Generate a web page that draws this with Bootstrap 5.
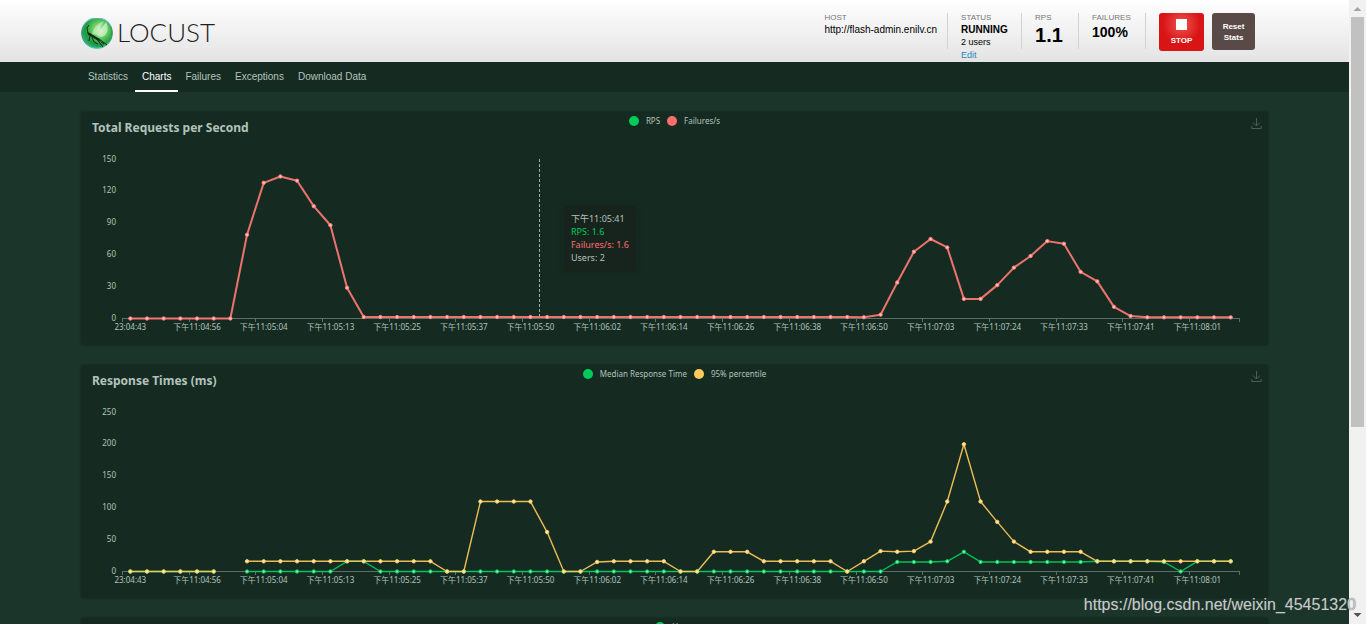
<!DOCTYPE html>
<html lang="en">
<head>
<meta charset="utf-8">
<meta name="viewport" content="width=device-width, initial-scale=1">
<title>Locust</title>
<link href="https://cdn.jsdelivr.net/npm/bootstrap@5.3.0/dist/css/bootstrap.min.css" rel="stylesheet">
<style>
  :root { --ink: #b3c3bc; --deep: #152b22; --green: #00ca5a; --red: #ff6d6d; --amber: #ffca5a; }
  body { background: #1b352b; color: var(--ink); font-family: "Noto Sans", "Noto Sans CJK SC", sans-serif; font-size: 10px; line-height: 13px; }
  .wrap { width: 88%; margin: 0 auto; }
  .top-bar { background: linear-gradient(#fff, #e3e3e3); height: 62px; font-family: "Liberation Sans", Arial, sans-serif; color: #000; }
  .brand-name { font-family: Lato, sans-serif; font-weight: 300; font-size: 26px; line-height: 32px; color: #222; }
  .stats-row { padding: 13px 13px 0 0; }
  .stat { height: 36px; padding-left: 13px; border-right: 1px solid #d2d2d2; font-size: 9px; line-height: 13px; white-space: nowrap; }
  .stat-label { font-size: 8px; line-height: 10px; color: #777; }
  .stat-host { padding-right: 10px; font-size: 10px; }
  .stat-status { width: 74px; }
  .stat-rps { width: 57px; }
  .stat-fail { width: 67px; margin-right: 13px; }
  .state { font-size: 10px; line-height: 13px; }
  .rate { font-size: 20px; line-height: 24px; }
  .ratio { font-size: 14px; line-height: 18px; }
  .stat a { color: #2a85b8; line-height: 12px; }
  .act { border: 0; border-radius: 3px; color: #fff; font-weight: 700; font-size: 8px; line-height: 11px; }
  .act-stop { width: 45px; height: 38px; background: radial-gradient(circle at 50% 30%, #e55 0, #d81414 55%); }
  .act-stop i { width: 11px; height: 11px; background: #fff; margin-bottom: 5px; }
  .act-reset { width: 43px; height: 37px; background: #594a48; }
  .tabs-bar { background: var(--deep); height: 30px; font-family: "Liberation Sans", Arial, sans-serif; }
  .tabs-bar .nav-link { padding: 8px 7px 7px; font-size: 10px; line-height: 13px; color: var(--ink); border-bottom: 2px solid transparent; }
  .tabs-bar .nav-link.active { color: #fff; border-color: #fff; }
  .panel { background: var(--deep); border-radius: 3px; margin-top: 20px; height: 233px; box-shadow: 0 0 1px 1px #172f26; }
  .panel-head { display: grid; grid-template-columns: 1fr auto 1fr; height: 28px; align-items: start; }
  .panel-title { font-size: 12px; line-height: 16px; font-weight: 700; margin: 8px 0 0 11px; }
  .legend-row { gap: 7px; font-size: 8px; line-height: 18px; grid-column: 2; }
  .dot { width: 10px; height: 10px; border-radius: 50%; }
  .save { border: 0; background: none; padding: 0; margin: 6px 6px 0 0; color: #4d5e56; justify-self: end; display: flex; }
  .plot { display: block; width: 100%; height: 205px; }
  .plot text { font-size: 8px; fill: var(--ink); }
  .tip { top: 94px; width: 72px; height: 66px; padding: 6px 7px; background: #17241e; border-radius: 3px; box-shadow: 0 0 5px #17241e; font-size: 9px; line-height: 13px; white-space: nowrap; }
  .g { color: var(--green); } .r { color: var(--red); }
  .bg-g { background: var(--green); } .bg-r { background: var(--red); } .bg-a { background: var(--amber); }
  .scroller { width: 17px; background: #f1f1f1; padding: 0 2px; }
  .scroller svg { height: 17px; flex: none; }
  .thumb { background: #c1c1c1; height: 69.5%; }
  .watermark { right: 10px; bottom: 8px; font: 16px/22px "Liberation Sans", Arial, sans-serif; color: #c4cbc8; text-shadow: 0 0 1px #555; z-index: 5; }
</style>
</head>
<body>
<div class="d-flex vh-100 overflow-hidden position-relative">
  <div class="flex-grow-1 overflow-hidden">
    <header class="top-bar">
      <div class="wrap d-flex justify-content-between">
        <a href="#" class="d-flex align-items-center text-decoration-none mt-3 pb-3" aria-label="Locust home">
          <svg width="32" height="32" viewBox="0 0 32 32" class="me-1" aria-hidden="true">
            <defs>
              <radialGradient id="orb" cx=".6" cy=".4" r=".65"><stop offset="0" stop-color="#c4efb8"/><stop offset=".4" stop-color="#62c95f"/><stop offset=".75" stop-color="#1f9a3c"/><stop offset="1" stop-color="#2bb08a"/></radialGradient>
              <linearGradient id="rim" x1="0" y1="0" x2="0" y2="1"><stop offset="0" stop-color="#62c5cf"/><stop offset=".5" stop-color="#2a8a58"/><stop offset="1" stop-color="#4cc4a4"/></linearGradient>
            </defs>
            <circle cx="16" cy="15" r="15.2" fill="url(#orb)" stroke="url(#rim)" stroke-width="1.2"/>
            <path d="M11 16C12 10 17 5 23 3C20 8 18 12 17 17Z" fill="#e6f8dc" opacity=".5"/>
            <path d="M16 17L25 4C28 9 27 15 23 18C20 20 18 19 16 17Z" fill="#effbe8" opacity=".55"/>
            <path d="M6 14L9 15L12 17L18 20.500L20 24L15 21.500L10 18.500L7 17Z" fill="#102b1c"/>
            <path d="M7 15L6 10L8 7M9 18L8 23M11 19L13 24L17 26M15 20L22 29M18 21L26 27M20 24L23 26" fill="none" stroke="#102b1c"/>
          </svg>
          <span class="brand-name pb-1">LOCUST</span>
        </a>
        <div class="d-flex stats-row">
          <div class="stat stat-host"><div class="stat-label">HOST</div>http://flash-admin.enilv.cn</div>
          <div class="stat stat-status"><div class="stat-label">STATUS</div><div class="state fw-bold">RUNNING</div><div>2 users</div><a href="#" class="d-block text-decoration-none">Edit</a></div>
          <div class="stat stat-rps"><div class="stat-label">RPS</div><div class="rate fw-bold">1.1</div></div>
          <div class="stat stat-fail"><div class="stat-label">FAILURES</div><div class="ratio fw-bold">100%</div></div>
          <button class="act act-stop d-flex flex-column align-items-center justify-content-center me-2 p-0"><i></i>STOP</button>
          <button class="act act-reset p-0">Reset<br>Stats</button>
        </div>
      </div>
    </header>
    <nav class="tabs-bar">
      <div class="wrap nav flex-nowrap">
        <a class="nav-link" href="#">Statistics</a>
        <a class="nav-link active" href="#" aria-current="page">Charts</a>
        <a class="nav-link" href="#">Failures</a>
        <a class="nav-link" href="#">Exceptions</a>
        <a class="nav-link" href="#">Download Data</a>
      </div>
    </nav>
    <main class="wrap">
      <section class="panel position-relative">
        <div class="panel-head">
          <h2 class="panel-title">Total Requests per Second</h2>
          <div class="legend-row d-flex align-items-center"><span class="dot bg-g"></span><span>RPS</span><span class="dot bg-r"></span><span>Failures/s</span></div>
          <button class="save" aria-label="Download chart"><svg width="11" height="11" viewBox="0 0 11 11" fill="none" stroke="currentColor"><path d="M5.5 0V8M2 4.5L5.5 8L9 4.5M.8 8V10.5H10.2V8"/></svg></button>
        </div>
        <svg class="plot" id="rps"></svg>
        <div class="tip position-absolute" id="tip">下午11:05:41<br><span class="g">RPS: 1.6</span><br><span class="r">Failures/s: 1.6</span><br>Users: 2</div>
      </section>
      <section class="panel">
        <div class="panel-head">
          <h2 class="panel-title">Response Times (ms)</h2>
          <div class="legend-row d-flex align-items-center"><span class="dot bg-g"></span><span>Median Response Time</span><span class="dot bg-a"></span><span>95% percentile</span></div>
          <button class="save" aria-label="Download chart"><svg width="11" height="11" viewBox="0 0 11 11" fill="none" stroke="currentColor"><path d="M5.5 0V8M2 4.5L5.5 8L9 4.5M.8 8V10.5H10.2V8"/></svg></button>
        </div>
        <svg class="plot" id="times"></svg>
      </section>
      <section class="panel">
        <div class="panel-head">
          <div class="legend-row d-flex align-items-center"><span class="dot bg-g"></span><span>Users</span></div>
        </div>
      </section>
    </main>
  </div>
  <div class="scroller d-flex flex-column flex-shrink-0" aria-hidden="true">
    <svg viewBox="0 0 13 17"><path d="M2.5 11L6.5 7L10.5 11Z" fill="#a3a3a3"/></svg>
    <div class="flex-grow-1"><div class="thumb"></div></div>
    <svg viewBox="0 0 13 17"><path d="M2.5 6L6.5 10L10.5 6Z" fill="#505050"/></svg>
  </div>
  <div class="watermark position-absolute">https://blog.csdn.net/weixin_45451320</div>
</div>
<script src="https://cdn.jsdelivr.net/npm/bootstrap@5.3.0/dist/js/bootstrap.bundle.min.js"></script>
<script>
  const rep = (v, n) => Array(n).fill(v);
  const labels = ['23:04:43', '下午11:04:56', '下午11:05:04', '下午11:05:13', '下午11:05:25', '下午11:05:37', '下午11:05:50', '下午11:06:02', '下午11:06:14', '下午11:06:26', '下午11:06:38', '下午11:06:50', '下午11:07:03', '下午11:07:24', '下午11:07:33', '下午11:07:41', '下午11:08:01'];
  const rps = [...rep(0, 7), 79, 128, 134, 130, 106, 88, 29, ...rep(1.4, 30), 1.2, 3.6, 34, 63, 75, 67, 18.5, 18.5, 31.5, 48, 59, 73, 70.5, 44, 35, 11, 2.3, ...rep(1.1, 6)];
  const p95 = [...rep(0, 6), null, ...rep(16, 12), 0, 0, ...rep(110, 4), 62, 0, 0, 15, ...rep(16, 4), 0, 0, ...rep(31, 3), ...rep(16, 5), 0, 16, 32, 31, 32, 47, 110, 200, 110, 78, 47, ...rep(31, 4), ...rep(16, 9)];
  const median = [...rep(0, 6), null, ...rep(0, 6), 16, 16, ...rep(0, 31), 15, 15, 15, 16, 31, ...rep(15, 7), ...rep(16, 4), 15, 0, 16, 16, 16];
  const LEFT = 41, RIGHT = 29, TOP = 19, BASE = 178, COUNT = 67;

  function draw(id, max, tick, series, stroke, pointer) {
    const svg = document.getElementById(id), w = svg.clientWidth;
    const step = (w - LEFT - RIGHT) / COUNT, end = w - RIGHT;
    const x = i => LEFT + step * (i + .5), y = v => BASE + .5 - v / max * (BASE - TOP);
    let s = `<path d="M${LEFT} ${BASE + .5}H${end}" stroke="#5b6f66"/>`;
    for (let v = 0; v <= max; v += tick) s += `<text x="${LEFT - 6}" y="${y(v) + 2}" text-anchor="end">${v}</text>`;
    labels.forEach((t, k) => {
      const tx = Math.round(LEFT + step * 4 * k) + .5;
      s += `<path d="M${tx} ${BASE}v4" stroke="#5b6f66"/><text x="${x(4 * k)}" y="${BASE + 12}" text-anchor="middle">${t}</text>`;
    });
    s += `<path d="M${Math.round(end) + .5} ${BASE}v4" stroke="#5b6f66"/>`;
    if (pointer) {
      const px = Math.round(LEFT + step * pointer) + .5;
      s += `<path d="M${px} ${TOP}V${BASE}" stroke="#9fb0a8" stroke-dasharray="3 2"/>`;
      document.getElementById('tip').style.left = (px + 24.5) + 'px';
    }
    for (const [data, color, core] of series) {
      let d = '', pen = 'M', dots = '';
      data.forEach((v, i) => {
        if (v === null) { pen = 'M'; return; }
        d += `${pen}${x(i)} ${y(v)}`; pen = 'L';
        dots += `<circle cx="${x(i)}" cy="${y(v)}" r="1.7" fill="${core}" stroke="${color}"/>`;
      });
      s += `<path d="${d}" fill="none" stroke="${color}" stroke-width="${stroke}" stroke-linejoin="round" opacity=".92"/>${dots}`;
    }
    svg.innerHTML = s;
  }
  function drawAll() {
    draw('rps', 150, 30, [[rps, '#ff7a72', '#ffc4c4']], 2, 25);
    draw('times', 250, 50, [[median, '#00ca5a', '#7df0ae'], [p95, '#ffca5a', '#ffe9b5']], 1.4);
  }
  drawAll();
  addEventListener('resize', drawAll);
</script>
</body>
</html>
